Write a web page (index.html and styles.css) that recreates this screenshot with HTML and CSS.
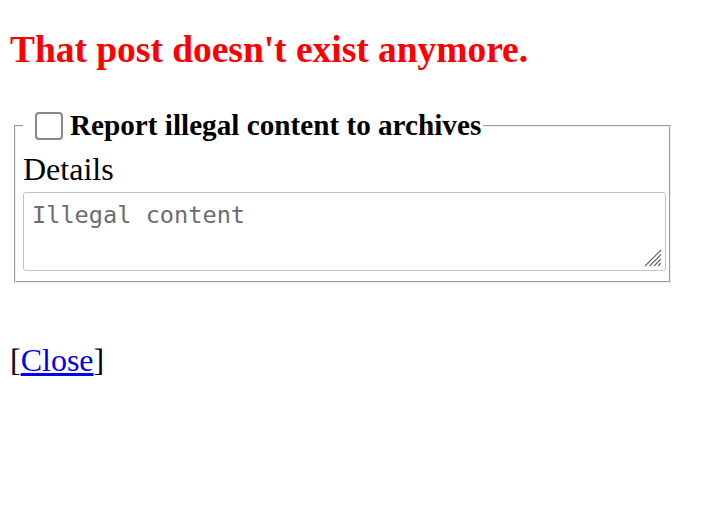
FILE: index.html
```html
<!DOCTYPE html>
<html lang="en">

<head>
    <meta charset="UTF-8">
    <title>Post removed</title>
    <link rel="stylesheet" href="styles.css">
</head>

<body>
    <h3 class="notice">That post doesn't exist anymore.</h3>

    <fieldset class="report">
        <legend class="report-legend"><input type="checkbox" class="report-check" id="report-check"><label for="report-check">Report illegal content to archives</label></legend>
        <label class="details-label" for="details">Details</label>
        <div class="details-wrap">
            <textarea id="details" class="details-box" placeholder="Illegal content"></textarea>
            <svg class="details-grip" width="18" height="18" viewBox="0 0 18 18">
                <path d="M1 17 L17 1 M5.5 17 L17 5.5 M10 17 L17 10 M14 17 L17 14" stroke="#6a6a6a" stroke-width="1.2" fill="none" />
            </svg>
        </div>
    </fieldset>

    <p class="close-line">[<a href="#">Close</a>]</p>
</body>

</html>
```

FILE: styles.css
```css
body {
    margin: 10px;
    font-family: "Liberation Serif", "Times New Roman", serif;
    font-size: 32px;
    color: #000;
    background-color: #fff;
}

.notice {
    color: #ff0000;
    font-size: 37.44px;
    font-weight: bold;
    margin: 18px 0 38px 0;
}

.report {
    margin: 0 0 0 4px;
    width: 657px;
    box-sizing: border-box;
    padding: 0 3px 10px 7px;
    border: 2px groove #f0f0f0;
}

.report-legend {
    padding: 0 2px;
    font-size: 29.2px;
    font-weight: bold;
    display: flex;
    align-items: center;
}

.report-check {
    appearance: none;
    -webkit-appearance: none;
    width: 28px;
    height: 28px;
    margin: 0 7px 0 10px;
    border: 2px solid #878793;
    border-radius: 4px;
    background-color: #fff;
    box-sizing: border-box;
}

.details-label {
    display: block;
    margin-top: 9px;
}

.details-wrap {
    position: relative;
    margin-top: 4px;
}

.details-box {
    display: block;
    width: 100%;
    height: 79px;
    box-sizing: border-box;
    margin: 0;
    padding: 8px 8px;
    border: 1px solid #c0c0c8;
    border-radius: 3px;
    font-family: "DejaVu Sans Mono", monospace;
    font-size: 23.6px;
    resize: none;
}

.details-box::placeholder {
    color: #6d6d6d;
}

.details-grip {
    position: absolute;
    right: 4px;
    bottom: 4px;
}

.close-line {
    margin: 59px 0 0 0;
}

.close-line a {
    color: #0000ee;
}
```
